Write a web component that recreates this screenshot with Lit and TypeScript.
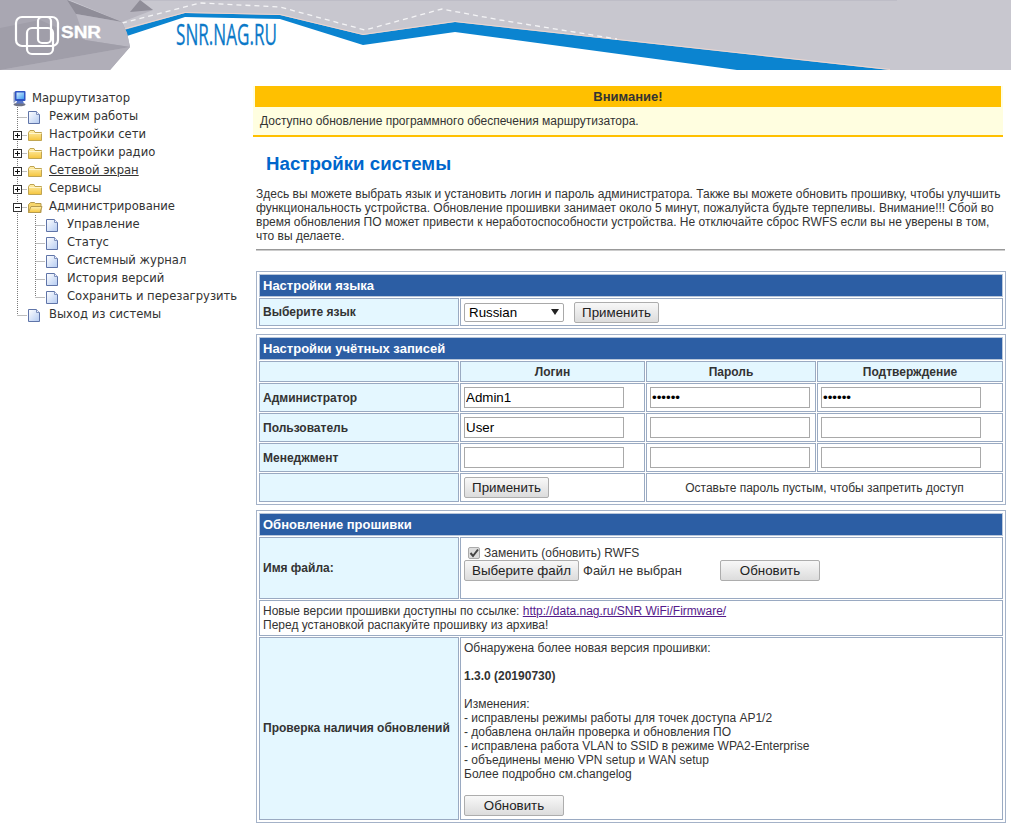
import { LitElement, html, css, svg } from "lit";
import { customElement } from "lit/decorators.js";

const dots = "#7a7a7a";
const joinIcon = (kind: "tee" | "end" | "plus" | "minus", last = false) => html`<svg class="cell" width="18" height="18" viewBox="0 0 18 18">
  <path d="M8.5 0V${last ? 10 : 18}M8.5 10.5H18" stroke="${dots}" stroke-dasharray="1 1" fill="none"/>
  ${kind === "plus" || kind === "minus"
    ? svg`<rect x="4.5" y="6.5" width="8" height="8" fill="#fff" stroke="#333"/><path d="M6 10.5h5${kind === "plus" ? "M8.5 8v5" : ""}" stroke="#111" fill="none"/>`
    : ""}
</svg>`;
const vline = (on: boolean) => html`<svg class="cell" width="18" height="18" viewBox="0 0 18 18">${on ? svg`<path d="M8.5 0V18" stroke="${dots}" stroke-dasharray="1 1"/>` : ""}</svg>`;
const pageIcon = html`<svg class="cell" width="18" height="18" viewBox="0 0 18 18">
  <defs><linearGradient id="pg" x1="0" y1="0" x2="1" y2="1"><stop offset="0" stop-color="#fff"/><stop offset="1" stop-color="#b4cbf2"/></linearGradient></defs>
  <path d="M1.5 4.5h8l3 3v9h-11z" fill="url(#pg)" stroke="#5f74a8"/><path d="M9.5 4.5v3h3" fill="#eef" stroke="#7f92bd"/>
</svg>`;
const folderIcon = (open: boolean) => html`<svg class="cell" width="18" height="18" viewBox="0 0 18 18">
  <defs><linearGradient id="fd" x1="0" y1="0" x2="0" y2="1"><stop offset="0" stop-color="#fff0b0"/><stop offset="1" stop-color="#f5c53c"/></linearGradient></defs>
  ${open
    ? svg`<path d="M1.5 7.5l2-2h4l1 1h5.5v9h-12.5z" fill="#f7d66c" stroke="#b59a4e"/><path d="M1.5 15.5l2.5-6h11l-2 6z" fill="url(#fd)" stroke="#b59a4e"/>`
    : svg`<path d="M1.5 7.5l1.5-2h4l1 2h6.5v8h-13z" fill="url(#fd)" stroke="#c0a552"/><path d="M2 8.5h12.5" stroke="#fff6cc"/>`}
</svg>`;
const rootIcon = html`<svg class="cell" width="18" height="18" viewBox="0 0 18 18">
  <defs><linearGradient id="mn" x1="0" y1="0" x2="1" y2="1"><stop offset="0" stop-color="#d8f0ff"/><stop offset="1" stop-color="#3f9bf0"/></linearGradient></defs>
  <ellipse cx="10.500" cy="15.500" rx="6" ry="1.700" fill="#6d7285"/>
  <path d="M4.500 3.500l2-1.500v11l-2 1z" fill="#8d9cc4"/>
  <rect x="6" y="2" width="10.500" height="10" rx="1" fill="#2f54c4"/>
  <rect x="7.500" y="3.500" width="7.500" height="6.500" fill="url(#mn)"/>
  <path d="M8 12h6l1 2.500h-8z" fill="#5a76c8"/>
</svg>`;

@customElement("app-root")
export class AppRoot extends LitElement {
  static styles = css`
    :host { display: block; width: 1011px; height: 827px; overflow: hidden; background: #fff; font-family: "Liberation Sans", Arial, sans-serif; font-size: 12px; color: #333; }
    .top { display: block; width: 1011px; height: 70px; }
    .body { display: grid; grid-template-columns: 253px 753px; }
    .tree { padding: 19px 0 0 9px; font-family: "DejaVu Sans", Verdana, sans-serif; font-size: 11.6px; color: #333; }
    .row { display: flex; height: 18px; align-items: center; white-space: nowrap; }
    .cell { flex: none; display: block; }
    .lbl { padding-left: 4px; }
    .lbl.u { text-decoration: underline; }
    .root .lbl { padding-left: 5px; }
    .main { padding-top: 16px; }
    .warn { width: 750px; background: #fffee0; border-bottom: 2px solid #ffc000; }
    .warn h4 { margin: 0 2px 0 2px; height: 21px; line-height: 21px; background: #ffc000; text-align: center; font-size: 13px; font-weight: bold; color: #333; }
    .warn p { margin: 0; height: 28px; line-height: 28px; padding-left: 7px; font-size: 12px; }
    h1 { margin: 0; padding: 15px 0 0 13px; height: 33px; line-height: 24px; font-size: 18.7px; font-weight: bold; color: #0066cc; box-sizing: content-box; }
    .intro { margin: 0; padding: 2px 0 0 3px; line-height: 14px; font-size: 12px; width: 750px; }
    hr { margin: 6px 0 0 3px; width: 749px; height: 0; border: 0; border-top: 1px solid #999; border-bottom: 1px solid #ccc; }
    table { display: table; width: 750px; margin-left: 3px; table-layout: fixed; border-collapse: separate; border-spacing: 1px; border: 1px solid #a4b2c8; padding: 1px; box-sizing: border-box; }
    table + table { margin-top: 5px; }
    .first { margin-top: 20px; }
    td, th { border: 1px solid #9aaac2; padding: 0 3px; font-size: 12px; vertical-align: middle; background: #fff; overflow: hidden; }
    th.title { background: #2c5ea4; border-color: #b8c6da; color: #fff; font-weight: bold; font-size: 13px; height: 21px; text-align: left; padding: 0 3px; }
    .head { background: #e4f7ff; font-weight: bold; text-align: left; }
    td.up { padding-bottom: 2px; }
    .ctr { text-align: center; }
    tr.h21 td { height: 19px; }
    tr.h29 td { height: 27px; }
    tr.h28 td { height: 26px; }
    input.text { display: block; box-sizing: border-box; width: 160px; height: 21px; border: 1px solid #a9a9a9; padding: 0 1px; font: 13.33px "Liberation Sans", Arial, sans-serif; color: #000; background: #fff; outline: 0; }
    .btn { box-sizing: border-box; height: 21px; padding: 0; border: 1px solid #adadad; border-radius: 2px; background: linear-gradient(#f8f8f8, #dcdcdc); font: 13.33px "Liberation Sans", Arial, sans-serif; color: #222; }
    .w85 { width: 85px; }
    .w100 { width: 100px; }
    .w115 { width: 115px; }
    .inl { display: flex; align-items: center; }
    .selw { position: relative; display: block; width: 100px; height: 19px; margin-right: 10px; }
    select { appearance: none; -webkit-appearance: none; box-sizing: border-box; display: block; width: 100px; height: 19px; border: 1px solid #a9a9a9; border-radius: 2px; background: #fff; padding: 0 4px; font: 13.33px "Liberation Sans", Arial, sans-serif; color: #000; }
    .selw::after { content: ""; position: absolute; right: 5px; top: 6px; border-left: 4px solid transparent; border-right: 4px solid transparent; border-top: 6px solid #222; }
    .chk { display: flex; align-items: center; height: 14px; padding-left: 4px; color: #333; }
    .box { box-sizing: border-box; width: 12px; height: 12px; margin-right: 4px; border: 1px solid #aaa; border-radius: 2px; background: #ddd; display: flex; align-items: center; justify-content: center; }
    .nofile { margin: 0 35px 0 4px; width: 102px; font-size: 13px; }
    td.file { padding-top: 8px; padding-bottom: 17px; }
    td.mono { line-height: 14px; padding-top: 3px; padding-bottom: 3px; }
    a { color: #551a8b; }
    td.notes { vertical-align: top; line-height: 14px; padding-top: 3px; padding-bottom: 3px; }
    .notes b { display: block; margin: 14px 0; }
    .notes .btn { display: block; margin-top: 14px; }
  `;

  render() {
    return html`
      <svg class="top" viewBox="0 0 1011 70" role="img" aria-label="SNR">
        <rect width="1011" height="70" fill="#c8c7cf"/>
        <rect width="897" height="1" fill="#bebdc7"/>
        <polygon points="124,30 185,13 280,15 363,35 455,22 500,27 890,70 0,70 0,30" fill="#0b84d0"/>
        <polygon points="127,36 185,17 280,19 363,45 455,32 500,38 737,70 0,70 0,36" fill="#fff"/>
        <path d="M124 29 185 12.500 280 14.500 363 34.500 455 21.500 500 26.500 890 69.500" stroke="#ecd6cf" fill="none"/>
        <path d="M122 23 200 3 280 7 365 30 442 9 500 20 617 39" stroke="#f4f4f6" stroke-width="1.300" stroke-dasharray="5 4" fill="none"/>
        <polygon points="70,0 140,0 153,10 122,22" fill="#b6b4be"/>
        <polygon points="140,0 153,10 130,12" fill="#8f8d98"/>
        <polygon points="0,0 67,0 122,22 127,33 130,47 110,70 0,70" fill="#a9a7b2"/>
        <polygon points="67,0 122,22 76,14" fill="#8f8d98"/>
        <polygon points="76,14 122,22 127,33 130,47 85,40" fill="#b9b7c1"/>
        <polygon points="0,28 40,20 85,40 130,47 0,70" fill="#a09ea9"/>
        <polygon points="0,70 130,47 110,70" fill="#b0aeb8"/>
        <g fill="none" stroke="#fff" stroke-width="2.200">
          <rect x="16" y="17" width="42" height="29" rx="6"/>
          <rect x="27" y="28" width="26" height="26" rx="5"/>
          <rect x="38" y="17" width="13" height="26" rx="4"/>
        </g>
        <text x="61" y="38" fill="#fff" stroke="#fff" stroke-width=".3" font-family="'Liberation Sans',sans-serif" font-weight="bold" font-size="16" textLength="40" lengthAdjust="spacingAndGlyphs">SNR</text>
        <text x="176" y="45" fill="#0b79c8" stroke="#0b79c8" stroke-width=".3" font-family="'Open Sans',sans-serif" font-size="29" textLength="101" lengthAdjust="spacingAndGlyphs">SNR.NAG.RU</text>
      </svg>
      <div class="body">
        <nav class="tree">
          <div class="row root">${rootIcon}<span class="lbl">Маршрутизатор</span></div>
          <div class="row">${joinIcon("tee")}${pageIcon}<span class="lbl">Режим работы</span></div>
          <div class="row">${joinIcon("plus")}${folderIcon(false)}<span class="lbl">Настройки сети</span></div>
          <div class="row">${joinIcon("plus")}${folderIcon(false)}<span class="lbl">Настройки радио</span></div>
          <div class="row">${joinIcon("plus")}${folderIcon(false)}<span class="lbl u">Сетевой экран</span></div>
          <div class="row">${joinIcon("plus")}${folderIcon(false)}<span class="lbl">Сервисы</span></div>
          <div class="row">${joinIcon("minus")}${folderIcon(true)}<span class="lbl">Администрирование</span></div>
          <div class="row">${vline(true)}${joinIcon("tee")}${pageIcon}<span class="lbl">Управление</span></div>
          <div class="row">${vline(true)}${joinIcon("tee")}${pageIcon}<span class="lbl">Статус</span></div>
          <div class="row">${vline(true)}${joinIcon("tee")}${pageIcon}<span class="lbl">Системный журнал</span></div>
          <div class="row">${vline(true)}${joinIcon("tee")}${pageIcon}<span class="lbl">История версий</span></div>
          <div class="row">${vline(true)}${joinIcon("end", true)}${pageIcon}<span class="lbl">Сохранить и перезагрузить</span></div>
          <div class="row">${joinIcon("end", true)}${pageIcon}<span class="lbl">Выход из системы</span></div>
        </nav>
        <main class="main">
          <div class="warn">
            <h4>Внимание!</h4>
            <p>Доступно обновление программного обеспечения маршрутизатора.</p>
          </div>
          <h1>Настройки системы</h1>
          <p class="intro">Здесь вы можете выбрать язык и установить логин и пароль администратора. Также вы можете обновить прошивку, чтобы улучшить функциональность устройства. Обновление прошивки занимает около 5 минут, пожалуйста будьте терпеливы. Внимание!!! Сбой во время обновления ПО может привести к неработоспособности устройства. Не отключайте сброс RWFS если вы не уверены в том, что вы делаете.</p>
          <hr />
          <table class="first">
            <colgroup><col style="width:200px" /><col /></colgroup>
            <tr><th colspan="2" class="title">Настройки языка</th></tr>
            <tr class="h28">
              <td class="head">Выберите язык</td>
              <td><div class="inl"><span class="selw"><select><option>Russian</option></select></span><button class="btn w85">Применить</button></div></td>
            </tr>
          </table>
          <table>
            <colgroup><col style="width:200px" /><col style="width:185px" /><col style="width:170px" /><col /></colgroup>
            <tr><th colspan="4" class="title">Настройки учётных записей</th></tr>
            <tr class="h21"><td class="head"></td><td class="head ctr">Логин</td><td class="head ctr">Пароль</td><td class="head ctr">Подтверждение</td></tr>
            <tr class="h29"><td class="head">Администратор</td><td><input class="text" value="Admin1" /></td><td><input class="text" type="password" value="123456" /></td><td><input class="text" type="password" value="123456" /></td></tr>
            <tr class="h29"><td class="head">Пользователь</td><td><input class="text" value="User" /></td><td><input class="text" type="password" /></td><td><input class="text" type="password" /></td></tr>
            <tr class="h29"><td class="head">Менеджмент</td><td><input class="text" /></td><td><input class="text" type="password" /></td><td><input class="text" type="password" /></td></tr>
            <tr class="h29"><td class="head"></td><td><button class="btn w85">Применить</button></td><td colspan="2" class="ctr">Оставьте пароль пустым, чтобы запретить доступ</td></tr>
          </table>
          <table>
            <colgroup><col style="width:200px" /><col /></colgroup>
            <tr><th colspan="2" class="title">Обновление прошивки</th></tr>
            <tr>
              <td class="head">Имя файла:</td>
              <td class="file">
                <div class="chk"><span class="box"><svg width="10" height="10" viewBox="0 0 10 10"><path d="M1.500 5l2.500 3 5-6.500" fill="none" stroke="#444" stroke-width="2"/></svg></span>Заменить (обновить) RWFS</div>
                <div class="inl"><button class="btn w115">Выберите файл</button><span class="nofile">Файл не выбран</span><button class="btn w100">Обновить</button></div>
              </td>
            </tr>
            <tr><td colspan="2" class="mono">Новые версии прошивки доступны по ссылке: <a href="#">http://data.nag.ru/SNR WiFi/Firmware/</a><br />Перед установкой распакуйте прошивку из архива!</td></tr>
            <tr>
              <td class="head up">Проверка наличия обновлений</td>
              <td class="notes">Обнаружена более новая версия прошивки:
                <b>1.3.0 (20190730)</b>
                Изменения:<br />
                - исправлены режимы работы для точек доступа AP1/2<br />
                - добавлена онлайн проверка и обновления ПО<br />
                - исправлена работа VLAN to SSID в режиме WPA2-Enterprise<br />
                - объединены меню VPN setup и WAN setup<br />
                Более подробно см.changelog
                <button class="btn w100">Обновить</button>
              </td>
            </tr>
          </table>
        </main>
      </div>
    `;
  }
}
